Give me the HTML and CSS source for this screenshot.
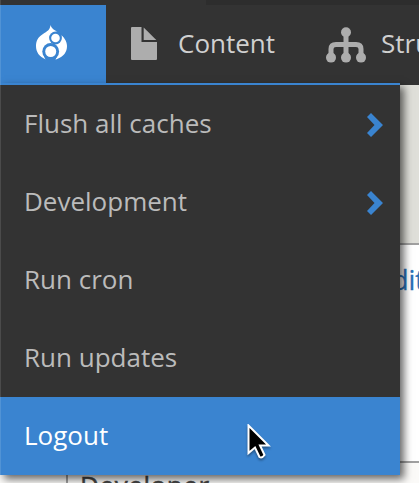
FILE: index.html
```html
<!DOCTYPE html>
<html lang="en">
<head>
<meta charset="utf-8">
<title>Toolbar</title>
<link rel="stylesheet" href="styles.css">
</head>
<body>
<div class="window">
  <div class="top-strip"><span class="top-tab"></span></div>
  <nav class="toolbar">
    <a class="home">
      <svg width="31" height="36" viewBox="0 0 31 36">
        <path fill="#fff" d="M14.5 0C15.5 4 19 5 23 8C28 12 31 16 31 21C31 27 28 31.500 20 34.500H10C3 31.500 0 27 0 21C0 16 2 12 7 9C11 6.500 14 5 14.500 0Z"/>
        <g fill="#3a84d0"><circle cx="19.500" cy="13" r="6.400"/><circle cx="14.700" cy="26.500" r="8.400"/><path d="M8 31L10 36H19L21 31Z"/><path d="M20 6L24 7L27 11L24 10Z"/></g>
        <circle cx="19.5" cy="13" r="4.3" fill="#fff"/>
        <circle cx="14.7" cy="26.5" r="5.5" fill="#fff"/>
      </svg>
    </a>
    <a class="tab content-tab">
      <svg width="26" height="33" viewBox="0 0 26 33" fill="#adadad"><path d="M1 0H10.5V15H26V32Q26 33 25 33H1Q0 33 0 32V1Q0 0 1 0Z"/><path d="M12.7 0.5L25.300 13H12.7Z"/></svg>
      <span>Content</span>
    </a>
    <a class="tab structure-tab">
      <svg width="40" height="36" viewBox="0 0 40 36"><path d="M20 5V30M5 30V22Q5 17.5 10 17.5H30Q35 17.5 35 22V30" fill="none" stroke="#adadad" stroke-width="5"/><g fill="#adadad"><circle cx="20" cy="5.3" r="5"/><circle cx="5" cy="30.6" r="5"/><circle cx="20" cy="30.6" r="5"/><circle cx="35" cy="30.6" r="5"/></g></svg>
      <span>Structure</span>
    </a>
  </nav>
  <main class="page">
    <div class="page-header"></div>
    <div class="page-body"><span class="edit">Edit</span></div>
    <div class="page-footer"><div class="footer-box">Developer</div></div>
  </main>
  <div class="menu">
    <a class="item"><span>Flush all caches</span><svg class="chevron" width="16" height="24" viewBox="0 0 16 24"><path d="M0 4L4 0L16 12L4 24L0 20L7.5 12Z" fill="#3a84d0"/></svg></a>
    <a class="item"><span>Development</span><svg class="chevron" width="16" height="24" viewBox="0 0 16 24"><path d="M0 4L4 0L16 12L4 24L0 20L7.5 12Z" fill="#3a84d0"/></svg></a>
    <a class="item"><span>Run cron</span></a>
    <a class="item"><span>Run updates</span></a>
    <a class="item active"><span>Logout</span></a>
  </div>
  <svg class="cursor" width="24" height="36" viewBox="0 0 24 36"><path d="M1.5 1.5V29L8 23.5L12.5 33Q15 34.5 17.5 31L13 21.5H21.5Z" fill="#000" stroke="#fff" stroke-width="2"/></svg>
  <span class="edge"></span>
</div>
</body>
</html>
```
FILE: styles.css
```css
* { box-sizing: border-box; }
body { margin: 0; font: 26px/36px "Open Sans", sans-serif; }
.window { position: relative; width: 419px; height: 483px; overflow: hidden; background: #fff; }
.top-strip { height: 5px; background: #2d2d2d; }
.top-tab { display: block; width: 206px; height: 5px; background: #333; }
.toolbar { display: flex; height: 80px; width: 540px; background: #333; color: #d0d0d0; }
.home { width: 106px; background: #3a84d0; padding: 20px 0 0 36px; }
.home svg, .tab svg { display: block; flex: none; }
.tab { display: flex; align-items: flex-start; padding-top: 22px; }
.tab span { margin-top: -2px; }
.content-tab { padding-left: 25px; width: 220px; gap: 21px; }
.structure-tab { gap: 15px; }
.page-header { height: 160px; background: #dfdfd9; border-bottom: 2px solid #a0a0a0; }
.page-body { height: 218px; padding: 17px 0 0 377px; border-bottom: 2px solid #a0a0a0; color: #2971b8; }
.edit { display: block; width: 60px; font-size: 27px; -webkit-text-stroke: .3px #2971b8; }
.page-footer { height: 20px; padding-left: 66px; background: #fbfaf8; }
.footer-box { height: 20px; padding: 4px 0 0 12px; border-left: 2px solid #a0a0a0; color: #444; letter-spacing: .6px; -webkit-text-stroke: .5px #444; }
.menu { position: absolute; left: 0; top: 83px; width: 400px; border-top: 2px solid #3a84d0; background: #333; color: #bbb; box-shadow: 4px 4px 8px rgba(0, 0, 0, .6); }
.item { display: flex; justify-content: space-between; align-items: center; height: 78px; padding: 0 17px 2px 24px; }
.chevron { margin-top: 4px; }
.active { background: #3a84d0; color: #fff; }
.cursor { position: absolute; left: 247px; top: 424px; filter: drop-shadow(0 2px 1px rgba(0, 0, 0, .35)); }
.edge { position: absolute; left: 0; top: 0; width: 1px; height: 475px; background: rgba(255, 255, 255, .12); }
```
